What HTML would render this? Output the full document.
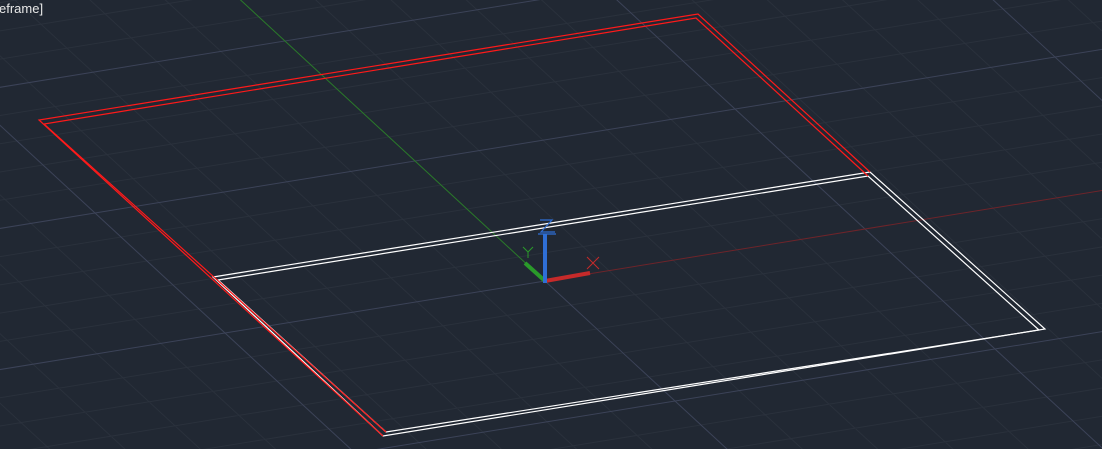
<!DOCTYPE html>
<html><head><meta charset="utf-8"><style>
html,body{margin:0;padding:0;background:#212833;overflow:hidden;width:1102px;height:449px}
svg{display:block;position:absolute;left:0;top:0}
</style></head><body>
<svg width="1102" height="449" viewBox="0 0 1102 449" xmlns="http://www.w3.org/2000/svg">
<rect width="1102" height="449" fill="#212833"/>
<g transform="matrix(64,-10.4,-26,-24,545,281)" fill="none">
<path vector-effect="non-scaling-stroke" stroke="#2a313c" stroke-width="1" d="
M-19 -20V20M-18 -20V20M-17 -20V20M-16 -20V20M-14 -20V20M-13 -20V20M-12 -20V20M-11 -20V20M-9 -20V20M-8 -20V20M-7 -20V20M-6 -20V20M-4 -20V20M-3 -20V20M-2 -20V20M-1 -20V20M1 -20V20M2 -20V20M3 -20V20M4 -20V20M6 -20V20M7 -20V20M8 -20V20M9 -20V20M11 -20V20M12 -20V20M13 -20V20M14 -20V20M16 -20V20M17 -20V20M18 -20V20M19 -20V20
M-20 -19H20M-20 -18H20M-20 -17H20M-20 -16H20M-20 -14H20M-20 -13H20M-20 -12H20M-20 -11H20M-20 -9H20M-20 -8H20M-20 -7H20M-20 -6H20M-20 -4H20M-20 -3H20M-20 -2H20M-20 -1H20M-20 1H20M-20 2H20M-20 3H20M-20 4H20M-20 6H20M-20 7H20M-20 8H20M-20 9H20M-20 11H20M-20 12H20M-20 13H20M-20 14H20M-20 16H20M-20 17H20M-20 18H20M-20 19H20"/>
<path vector-effect="non-scaling-stroke" stroke="#3c4358" stroke-width="1" d="
M-20 -20V20M-15 -20V20M-10 -20V20M-5 -20V20M0 -20V0M5 -20V20M10 -20V20M15 -20V20M20 -20V20
M-20 -20H20M-20 -15H20M-20 -10H20M-20 -5H20M-20 0H0M-20 5H20M-20 10H20M-20 15H20M-20 20H20"/>
<path vector-effect="non-scaling-stroke" stroke="#6e242a" stroke-width="1" d="M0 0H20"/>
<path vector-effect="non-scaling-stroke" stroke="#2a7a2a" stroke-width="1" d="M0 0V20"/>
</g>
<g fill="none" stroke="#ffffff" stroke-width="1.2">
<polygon points="213,277 870,172 1045,329 383,436"/>
<polygon points="218,280 868,176 1039,330 386,432"/>
</g>
<g fill="none" stroke="#ff1a1a" stroke-width="1.2">
<polyline points="383,436 39,120 698,14 870,172"/>
<polyline points="386,432 44,124 696,18 868,176"/>
</g>
<line x1="545" y1="281" x2="590" y2="273" stroke="#c62a2a" stroke-width="4"/>
<line x1="545" y1="281" x2="525" y2="263" stroke="#2a9a2a" stroke-width="4"/>
<line x1="545" y1="283" x2="545" y2="234" stroke="#2f6fd6" stroke-width="4"/>
<path d="M540 220H552L541 232H555M538 234H556" stroke="#2f6fd6" stroke-width="1.2" fill="none"/>
<path d="M523 247L528 252L533 247M528 252V258" stroke="#2a9a2a" stroke-width="1" fill="none"/>
<path d="M587 257L599 269M599 257L587 269" stroke="#c62a2a" stroke-width="1" fill="none"/>
<text x="-1" y="13" fill="#e8e8e8" font-family="Liberation Sans, sans-serif" font-size="13">eframe]</text>
</svg>
</body></html>
